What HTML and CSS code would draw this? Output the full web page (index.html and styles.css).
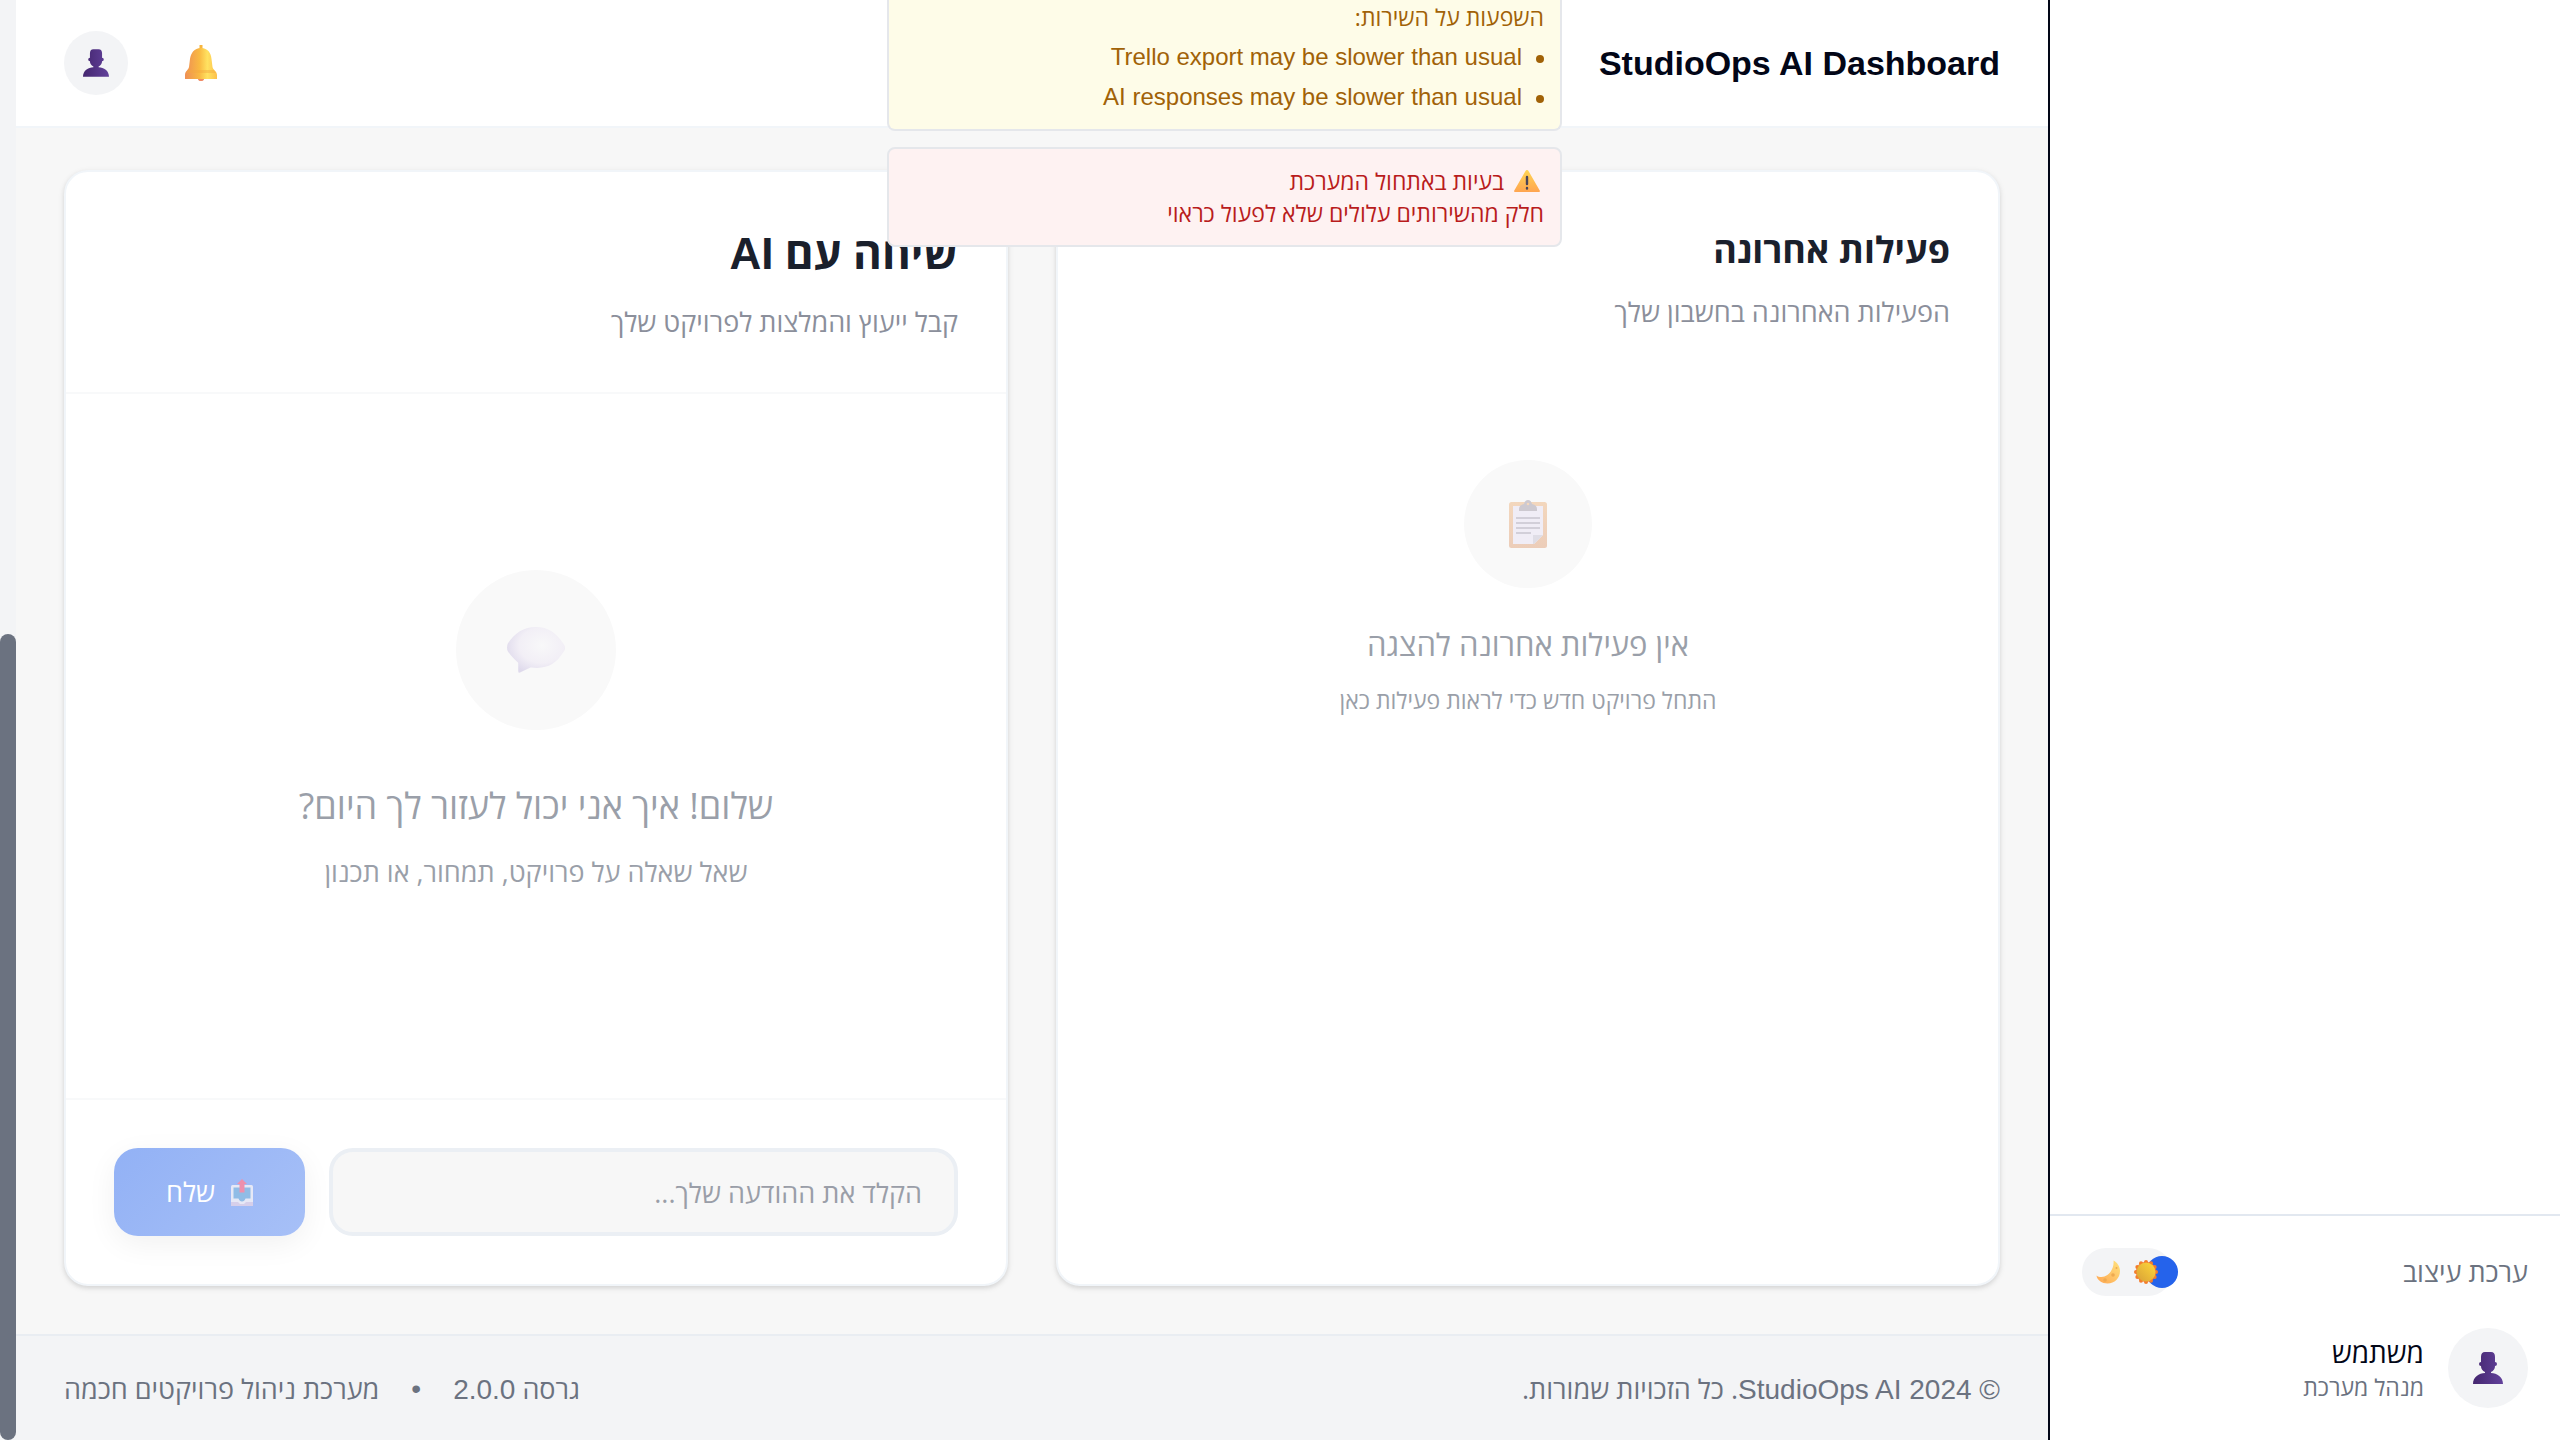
FILE: index.html
```html
<!DOCTYPE html>
<html lang="he" dir="rtl">
<head>
<meta charset="utf-8">
<title>StudioOps AI Dashboard</title>
<link rel="stylesheet" href="styles.css">
</head>
<body>
<svg class="defs" width="0" height="0" aria-hidden="true">
  <defs>
    <linearGradient id="purple" x1="0" y1="0" x2="1" y2="0">
      <stop offset="0" stop-color="#44266f"/><stop offset="1" stop-color="#62419b"/>
    </linearGradient>
    <linearGradient id="gold" x1="0" y1="0" x2="1" y2="0">
      <stop offset="0" stop-color="#ee8f55"/><stop offset=".45" stop-color="#f9b942"/><stop offset=".7" stop-color="#ffe261"/><stop offset="1" stop-color="#fdc04c"/>
    </linearGradient>
    <linearGradient id="amber" x1="0" y1="0" x2="0" y2="1">
      <stop offset="0" stop-color="#ffd553"/><stop offset="1" stop-color="#ffa550"/>
    </linearGradient>
    <linearGradient id="sunface" x1="1" y1="0" x2="0" y2="1">
      <stop offset="0" stop-color="#ffd83a"/><stop offset="1" stop-color="#d8a037"/>
    </linearGradient>
    <linearGradient id="moonface" x1="0" y1="1" x2="1" y2="0">
      <stop offset="0" stop-color="#ffa652"/><stop offset="1" stop-color="#ffe27c"/>
    </linearGradient>
    <radialGradient id="bubble" cx=".6" cy=".4" r=".65">
      <stop offset="0" stop-color="#f8f8f9"/><stop offset=".6" stop-color="#f2eff6"/><stop offset="1" stop-color="#dfdaec"/>
    </radialGradient>
    <linearGradient id="board" x1="0" y1="0" x2="0" y2="1">
      <stop offset="0" stop-color="#f3d7bd"/><stop offset="1" stop-color="#eccdb9"/>
    </linearGradient>
    <symbol id="person" viewBox="0 0 30 32">
      <path fill="url(#purple)" d="M8 5Q8 0 12 0h6q4 0 4 5v5q2 0 2 2t-2 2q0 4-4 6v1c6 0 12 4 12 11H0c0-7 6-11 12-11v-1q-4-2-4-6-2 0-2-2t2-2z"/>
    </symbol>
  </defs>
</svg>

<div class="app">
  <aside class="sidebar">
    <div class="sidebar-foot">
      <div class="theme-row">
        <span>ערכת עיצוב</span>
        <button class="theme-toggle" type="button" aria-label="ערכת עיצוב">
          <span class="knob"></span>
          <svg class="sun" viewBox="0 0 24 24">
            <g fill="#f47c2c">
              <circle cx="12" cy="12" r="10.200"/>
              <circle cx="12" cy="2" r="2"/><circle cx="17" cy="3.340" r="2"/><circle cx="20.660" cy="7" r="2"/><circle cx="22" cy="12" r="2"/><circle cx="20.660" cy="17" r="2"/><circle cx="17" cy="20.660" r="2"/><circle cx="12" cy="22" r="2"/><circle cx="7" cy="20.660" r="2"/><circle cx="3.340" cy="17" r="2"/><circle cx="2" cy="12" r="2"/><circle cx="3.340" cy="7" r="2"/><circle cx="7" cy="3.340" r="2"/>
            </g>
            <circle cx="12" cy="12" r="9.500" fill="url(#sunface)"/>
          </svg>
          <svg class="moon" viewBox="0 0 24 24">
            <path fill="url(#moonface)" d="M17.500.5C21 2 24 6.500 24 11c0 7-5.500 12.500-12.500 12.500C6 23.500 1 20 .5 15.500c1 1 3 1.500 5 1.500C12.500 17 18.500 9 17.500.5z"/>
            <g fill="#eeaa50"><circle cx="9" cy="20" r="1.800"/><circle cx="17" cy="15" r="1.800"/><circle cx="20.500" cy="8" r="1"/></g>
          </svg>
        </button>
      </div>
      <div class="profile">
        <span class="avatar avatar-lg"><svg class="person-lg"><use href="#person"/></svg></span>
        <div class="profile-text">
          <div class="profile-name">משתמש</div>
          <div class="profile-role">מנהל מערכת</div>
        </div>
      </div>
    </div>
  </aside>

  <div class="page">
    <header class="topbar">
      <h1>StudioOps AI Dashboard</h1>
      <div class="topbar-actions">
        <button class="bell" type="button" aria-label="התראות">
          <svg viewBox="0 0 34 36">
            <circle cx="17" cy="33" r="3.200" fill="#f08a66"/>
            <path fill="#f7b53f" d="M15.500 0h3v6h-3z"/>
            <path fill="url(#gold)" d="M17 3c7 0 10 5 10.500 11l1 8c.4 3 4.500 4 4.500 8v4H1v-4c0-4 3.500-5 4-8l1-8C7 8 10 3 17 3z"/>
            <path fill="#f5a83f" opacity=".45" d="M4 25h26l2 3H2z"/>
          </svg>
        </button>
        <button class="avatar" type="button" aria-label="משתמש"><svg class="person-sm"><use href="#person"/></svg></button>
      </div>
    </header>

    <main class="cards">
      <section class="card">
        <div class="card-head">
          <h2 class="title-md">פעילות אחרונה</h2>
          <p>הפעילות האחרונה בחשבון שלך</p>
        </div>
        <div class="empty">
          <span class="disc">
            <svg class="clipboard" viewBox="0 0 38 48">
              <rect y="2" width="38" height="46" rx="2.500" fill="url(#board)"/>
              <path fill="#f0edf6" d="M4 6h30v29l-9 9H4z"/>
              <path fill="#dfdde6" d="M24 35h10l-9 9h-1z"/>
              <path fill="#cdc9d0" d="M10 11V9q0-4 5-5 1-4 4-4t4 4q5 1 5 5v2z"/>
              <circle cx="19" cy="4" r="1.300" fill="#f3d7bd"/>
              <path stroke="#d2cfd9" stroke-width="2" d="M7 18h24M7 23h24M7 28h24M7 33h15"/>
            </svg>
          </span>
          <p class="empty-title">אין פעילות אחרונה להצגה</p>
          <p class="empty-sub">התחל פרויקט חדש כדי לראות פעילות כאן</p>
        </div>
      </section>

      <section class="card">
        <div class="card-head card-head-lined">
          <h2 class="title-lg">שיחה עם <span class="latin">AI</span></h2>
          <p>קבל ייעוץ והמלצות לפרויקט שלך</p>
        </div>
        <div class="chat">
          <span class="disc disc-lg">
            <svg class="speech" viewBox="0 0 62 45" preserveAspectRatio="none">
              <path fill="url(#bubble)" d="M31 0c13 0 22 6 29 16 3 4 3 5 0 9-7 10-15 15-28 15-3 0-6-1-8 0l-9 4q-3 2-3-1v-8C8 32 5 29 1 24q-2-4 0-8C8 6 18 0 31 0z"/>
            </svg>
          </span>
          <p class="chat-title">שלום! איך אני יכול לעזור לך היום?</p>
          <p class="chat-sub">שאל שאלה על פרויקט, תמחור, או תכנון</p>
        </div>
        <form class="composer">
          <input type="text" aria-label="הודעה" placeholder="הקלד את ההודעה שלך...">
          <button class="send" type="button">
            <svg viewBox="0 0 22 27">
              <rect y="6" width="22" height="21" rx="1.500" fill="#e6e8f6"/>
              <path fill="#d6cfea" d="M0 23h7l2 2h4l2-2h7v4H0z"/>
              <path fill="#90bce6" d="M2.500 8.500h17v11h-5q-1 3-3.500 3t-3.500-3h-5z"/>
              <path fill="#ed90ad" d="M11 0l5 5h-2.500v8.500h-5V5H6z"/>
            </svg>
            <span>שלח</span>
          </button>
        </form>
      </section>
    </main>

    <footer class="footer">
      <span><span class="latin">© 2024 StudioOps AI</span>. כל הזכויות שמורות.</span>
      <div class="footer-meta">
        <span>גרסה <span class="latin">2.0.0</span></span><span class="latin">•</span><span>מערכת ניהול פרויקטים חכמה</span>
      </div>
    </footer>
  </div>

  <div class="scrollbar"><div class="thumb"></div></div>

  <div class="alerts">
    <div class="alert alert-warn">
      <p>השפעות על השירות:</p>
      <ul>
        <li>Trello export may be slower than usual</li>
        <li>AI responses may be slower than usual</li>
      </ul>
    </div>
    <div class="alert alert-error" role="alert">
      <p class="alert-line">
        <svg viewBox="0 0 26 22">
          <path fill="url(#amber)" d="M13 0q1 0 1.500 1L26 21q0 1-1 1H1q-1 0-1-1L11.500 1q.5-1 1.500-1z"/>
          <path stroke="#4a4458" stroke-width="2.400" stroke-linecap="round" d="M13 7v7M13 18v.5"/>
        </svg>
        <span>בעיות באתחול המערכת</span>
      </p>
      <p>חלק מהשירותים עלולים שלא לפעול כראוי</p>
    </div>
  </div>
</div>
</body>
</html>
```
FILE: styles.css
```css
* { box-sizing: border-box; }
body {
  margin: 0;
  background: #f7f7f7;
  color: #020617;
  font-family: "Open Sans", "Liberation Sans", Arial, sans-serif;
  font-size: 27px;
  line-height: 44px;
}
.latin { font-family: "Liberation Sans", Arial, sans-serif; line-height: 1; }
h1, h2, p, ul { margin: 0; padding: 0; }
button, input { font: inherit; border: 0; padding: 0; margin: 0; background: none; }
svg { display: block; flex: none; }
.defs { position: absolute; }

.app { position: relative; display: flex; min-height: 100vh; overflow: hidden; }

/* Sidebar */
.sidebar {
  width: 20%;
  display: flex;
  flex-direction: column;
  justify-content: flex-end;
  background: #fff;
  border-left: 2px solid #020617;
}
.sidebar-foot {
  display: flex;
  flex-direction: column;
  gap: 32px;
  padding: 32px;
  border-top: 2px solid #e2e8f0;
}
.theme-row { display: flex; align-items: center; justify-content: space-between; height: 48px; color: #6b7280; }
.theme-toggle {
  position: relative;
  display: flex;
  align-items: center;
  gap: 14px;
  height: 48px;
  padding: 0 14px;
  border-radius: 24px;
  background: #f3f4f6;
}
.knob {
  position: absolute;
  top: 8px;
  left: 64px;
  width: 32px;
  height: 32px;
  border-radius: 50%;
  background: #2563eb;
}
.sun, .moon { position: relative; width: 24px; height: 24px; }
.profile { display: flex; align-items: center; gap: 24px; }
.profile-name { font-size: 28px; line-height: 38px; }
.profile-role { font-size: 23px; line-height: 32px; color: #6b7280; }
.avatar {
  display: flex;
  align-items: center;
  justify-content: center;
  width: 64px;
  height: 64px;
  border-radius: 50%;
  background: #f3f4f6;
}
.avatar-lg { width: 80px; height: 80px; }
.person-sm { width: 26px; height: 28px; }
.person-lg { width: 30px; height: 32px; }

/* Page */
.page { flex: 1; min-width: 0; display: flex; flex-direction: column; }
.topbar {
  display: flex;
  align-items: center;
  justify-content: space-between;
  height: 128px;
  padding: 0 48px;
  background: #fff;
  border-bottom: 2px solid #f1f5f9;
}
.topbar h1 { font-family: "Liberation Sans", Arial, sans-serif; font-size: 34px; line-height: 44px; }
.topbar-actions { display: flex; align-items: center; gap: 56px; }
.bell svg { width: 34px; height: 36px; }

.cards { flex: 1; display: grid; grid-template-columns: 1fr 1fr; gap: 48px; padding: 42px 48px 48px; }
.card {
  display: flex;
  flex-direction: column;
  background: #fff;
  border: 2px solid #f1f5f9;
  border-radius: 24px;
  box-shadow: 0 2px 6px rgba(0, 0, 0, .1), 0 2px 4px rgba(0, 0, 0, .06);
}
.card-head { padding: 48px; color: #8b8f9b; }
.card-head-lined { border-bottom: 2px solid #f8f9fa; }
.card-head h2 { color: #1a202c; }
.title-md { margin-bottom: 10px; font-size: 36px; line-height: 60px; }
.title-lg { margin-bottom: 16px; font-size: 44px; line-height: 64px; }

.disc {
  display: flex;
  align-items: center;
  justify-content: center;
  width: 128px;
  height: 128px;
  border-radius: 50%;
  background: #f9f9f9;
}
.disc-lg { width: 160px; height: 160px; }
.clipboard { width: 38px; height: 48px; }
.speech { width: 58px; height: 46px; }
.empty, .chat { display: flex; flex-direction: column; align-items: center; color: #9a9fa9; }
.empty { padding-top: 78px; }
.empty-title { margin: 32px 0 12px; font-size: 31px; line-height: 48px; }
.empty-sub { font-size: 23px; line-height: 40px; }
.chat { flex: 1; justify-content: center; padding-bottom: 28px; }
.chat-title { margin: 48px 0 16px; font-size: 36px; line-height: 56px; }

.composer { display: flex; gap: 24px; padding: 48px; border-top: 2px solid #f8f9fa; }
.composer input {
  flex: 1;
  min-width: 0;
  height: 88px;
  padding: 0 32px;
  border: 4px solid #ebeff4;
  border-radius: 24px;
  background: #f7f7f7;
}
.composer input::placeholder { color: #9a9ea8; opacity: 1; }
.send {
  display: flex;
  align-items: center;
  gap: 16px;
  padding: 0 52px;
  border-radius: 24px;
  background: linear-gradient(135deg, #92b1f5, #a7c0f7);
  box-shadow: 0 8px 30px rgba(0, 0, 0, .06);
  color: #fff;
}
.send svg { width: 22px; height: 27px; }

.footer {
  display: flex;
  justify-content: space-between;
  padding: 31px 48px 29px;
  background: #f3f4f6;
  border-top: 2px solid #e9edf2;
  color: #6b7280;
}
.footer .latin { font-size: 28px; }
.footer-meta { display: flex; align-items: center; gap: 32px; }

.scrollbar { display: flex; align-items: flex-end; width: 16px; background: #f3f4f6; }
.thumb { width: 16px; height: 56%; border-radius: 8px; background: #6b7280; }

/* Service alerts lying over the page */
.alerts {
  position: absolute;
  top: 0;
  right: 998px;
  width: 675px;
  display: flex;
  flex-direction: column;
  gap: 16px;
  font-size: 23px;
  line-height: 32px;
}
.alert { padding: 16px; border: 2px solid #e5e7eb; border-radius: 8px; }
.alert-warn {
  padding-top: 1px;
  border-top: 0;
  border-radius: 0 0 8px 8px;
  background: #fefce8;
  color: #a16207;
}
.alert-warn ul { list-style: none; font-family: "Liberation Sans", Arial, sans-serif; font-size: 24px; }
.alert-warn li { display: flex; align-items: center; gap: 14px; margin-top: 8px; }
.alert-warn li::before { content: ""; width: 8px; height: 8px; margin-top: 4px; border-radius: 50%; background: #a16207; }
.alert-error { background: #fef2f2; color: #b91c1c; }
.alert-line { display: flex; align-items: center; gap: 10px; padding-right: 4px; }
.alert-line svg { width: 26px; height: 22px; }
```
